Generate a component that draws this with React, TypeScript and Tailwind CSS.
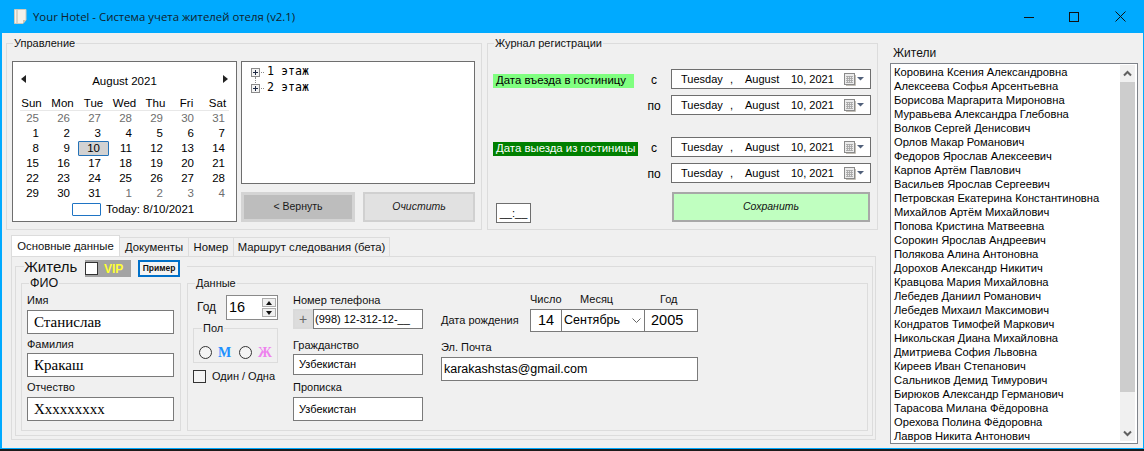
import type { ReactNode } from "react";

const residents = [
  "Коровина Ксения Александровна",
  "Алексеева Софья Арсентьевна",
  "Борисова Маргарита Мироновна",
  "Муравьева Александра Глебовна",
  "Волков Сергей Денисович",
  "Орлов Макар Романович",
  "Федоров Ярослав Алексеевич",
  "Карпов Артём Павлович",
  "Васильев Ярослав Сергеевич",
  "Петровская Екатерина Константиновна",
  "Михайлов Артём Михайлович",
  "Попова Кристина Матвеевна",
  "Сорокин Ярослав Андреевич",
  "Полякова Алина Антоновна",
  "Дорохов Александр Никитич",
  "Кравцова Мария Михайловна",
  "Лебедев Даниил Романович",
  "Лебедев Михаил Максимович",
  "Кондратов Тимофей Маркович",
  "Никольская Диана Михайловна",
  "Дмитриева София Львовна",
  "Киреев Иван Степанович",
  "Сальников Демид Тимурович",
  "Бирюков Александр Германович",
  "Тарасова Милана Фёдоровна",
  "Орехова Полина Фёдоровна",
  "Лавров Никита Антонович",
];

const weekDays = ["Sun", "Mon", "Tue", "Wed", "Thu", "Fri", "Sat"];

const calendarDays = [
  ...[25, 26, 27, 28, 29, 30, 31].map((d) => ({ d, muted: true })),
  ...Array.from({ length: 31 }, (_, i) => ({ d: i + 1, muted: false })),
  ...[1, 2, 3, 4].map((d) => ({ d, muted: true })),
];

function GroupBox({
  title,
  className,
  legendClass,
  children,
}: {
  title: ReactNode;
  className: string;
  legendClass: string;
  children: ReactNode;
}) {
  return (
    <fieldset className={`border border-[#dcdcdc] ${className}`}>
      <legend className={legendClass}>{title}</legend>
      {children}
    </fieldset>
  );
}

function Calendar() {
  return (
    <div className="flex h-[161px] w-[225px] shrink-0 flex-col border border-[#6e6e6e] bg-white pl-[3px] text-[11.5px] text-black">
      <div className="flex h-[33px] w-[217px] items-center justify-between pl-[5px] pr-[5px] pt-[2px]">
        <svg width="5" height="8" viewBox="0 0 5 8" className="-mt-[2px]">
          <path d="M5 0v8L0 4z" fill="#222" />
        </svg>
        <span className="pt-[5px]">August 2021</span>
        <svg width="5" height="8" viewBox="0 0 5 8" className="-mt-[2px]">
          <path d="M0 0v8l5-4z" fill="#222" />
        </svg>
      </div>
      <div className="grid h-[15px] w-[217px] grid-cols-7 items-center">
        {weekDays.map((w) => (
          <span key={w} className="text-center">
            {w}
          </span>
        ))}
      </div>
      <div className="ml-[4px] h-px w-[209px] bg-[#e8e8e8]" />
      <div className="grid w-[217px] grid-cols-7 auto-rows-[15px]">
        {calendarDays.map((c, i) => (
          <span
            key={i}
            className={`flex items-center justify-end pr-[8px] ${c.muted ? "text-[#6d6d6d]" : ""} ${
              c.d === 10 && !c.muted ? "rounded-[1px] border border-[#2472b8] bg-[#d2d2d2]" : ""
            }`}
          >
            {c.d}
          </span>
        ))}
      </div>
      <div className="mt-[2px] flex h-[13px] items-center pl-[56px]">
        <span className="h-[13px] w-[29px] rounded-[1px] border border-[#1f74c4]" />
        <span className="ml-[5px]">Today: 8/10/2021</span>
      </div>
    </div>
  );
}

function TreeRow({ label, line }: { label: string; line?: boolean }) {
  return (
    <div className="relative flex h-[16px] items-center">
      <svg width="16" height="9" viewBox="0 0 16 9" className="shrink-0">
        <rect x="0.5" y="0.5" width="8" height="8" fill="#f4f4f4" stroke="#8b8b8b" />
        <path d="M2 4.5h5M4.5 2v5" stroke="#1f2a44" />
        <path d="M10 4.5h1M12 4.5h1" stroke="#8b8b8b" />
      </svg>
      <span className="whitespace-pre font-['DejaVu_Sans_Mono',monospace] text-[11.6px] text-black">{label}</span>
      {line && <span className="absolute left-[4px] top-[13px] h-[6px] border-l border-dotted border-[#8b8b8b]" />}
    </div>
  );
}

function Tree() {
  return (
    <div className="h-[123px] border border-[#6e6e6e] bg-white pl-[9px] pt-[2px]">
      <TreeRow label="1 этаж" line />
      <TreeRow label="2 этаж" />
    </div>
  );
}

function CalendarIcon() {
  return (
    <svg width="20" height="13" viewBox="0 0 20 13" className="shrink-0">
      <rect x="0.5" y="0.5" width="10" height="11" fill="#ececec" stroke="#8a8a8a" />
      <path d="M11.5 2v10.5H2" fill="none" stroke="#c4c0b8" />
      <path d="M2 3.5h7M2 5.5h7M2 7.5h7M2 9.5h7M3.5 3v7M5.5 3v7M7.5 3v7" stroke="#a8a8a8" strokeWidth="0.9" />
      <path d="M13 4h7l-3.5 3.5z" fill="#51607a" />
    </svg>
  );
}

function DatePicker() {
  return (
    <div className="flex h-[20px] w-[200px] items-center border border-[#6e6e6e] bg-white text-[11px] text-black">
      <span className="ml-[9px] w-[49px] pt-[1px]">Tuesday</span>
      <span className="w-[15px] pt-[1px]">,</span>
      <span className="w-[46px] pt-[1px]">August</span>
      <span className="w-[53px] pt-[1px]">10, 2021</span>
      <CalendarIcon />
    </div>
  );
}

function DateRange({ label, labelClass, className }: { label: string; labelClass: string; className: string }) {
  return (
    <div className={`flex ${className}`}>
      <div className="w-[157px] shrink-0 pl-[5px] pt-[5px]">
        <div className={`flex h-[14px] items-center whitespace-nowrap pl-[3px] text-[11.4px] ${labelClass}`}>{label}</div>
      </div>
      <div className="flex flex-col gap-[6px]">
        {["с", "по"].map((p) => (
          <div key={p} className="flex items-center">
            <span className="mr-[8px] w-[18px] pt-[1px] text-center text-[12px] text-black">{p}</span>
            <DatePicker />
          </div>
        ))}
      </div>
    </div>
  );
}

function Management() {
  return (
    <GroupBox
      title="Управление"
      className="h-[194px] w-[476px] shrink-0 pl-[5px] pt-[11px]"
      legendClass="ml-[1px] h-[14px] px-[1px] text-[11px] leading-[14px] text-[#111]"
    >
      <div className="flex gap-[4px]">
        <Calendar />
        <div className="flex w-[234px] flex-col">
          <Tree />
          <div className="mt-[8px] flex gap-[8px] text-[10.5px] text-[#1a1a1a]">
            <button className="h-[30px] w-[114px] border-[3px] border-[#d4d4d4] bg-[#bdbdbd]">&lt; Вернуть</button>
            <button className="h-[30px] w-[112px] border-2 border-[#d0d0d0] bg-[#e1e1e1] italic">Очистить</button>
          </div>
        </div>
      </div>
    </GroupBox>
  );
}

function Journal() {
  return (
    <GroupBox
      title="Журнал регистрации"
      className="h-[194px] w-[391px] shrink-0 pt-[19px]"
      legendClass="ml-[6px] h-[14px] px-[1px] text-[11px] leading-[14px] text-[#111]"
    >
      <DateRange label="Дата въезда в гостиницу" labelClass="w-[141px] bg-[#80ff80] text-black" className="" />
      <DateRange label="Дата выезда из гостиницы" labelClass="w-[145px] bg-[#008000] text-white" className="mt-[22px]" />
      <div className="mt-[9px] flex items-start pl-[8px]">
        <div className="mt-[11px] flex h-[20px] w-[35px] items-center justify-center border border-[#6e6e6e] bg-white text-[11px] text-black">
          __:__
        </div>
        <button className="ml-[141px] h-[30px] w-[198px] border-2 border-[#a8a8a8] bg-[#c0ffc0] text-[10.5px] italic text-[#111]">
          Сохранить
        </button>
      </div>
    </GroupBox>
  );
}

function Field({ value, className }: { value: string; className: string }) {
  return <div className={`flex items-center border border-[#7a7a7a] bg-white text-black ${className}`}>{value}</div>;
}

function Caption({ text, className }: { text: string; className: string }) {
  return <div className={`flex items-center text-[11px] text-[#111] ${className}`}>{text}</div>;
}

function NameFields() {
  const rows = [
    { label: "Имя", value: "Станислав", h: "h-[20px]" },
    { label: "Фамилия", value: "Кракаш", h: "h-[19px] pt-[1px]" },
    { label: "Отчество", value: "Xxxxxxxxx", h: "h-[20px]" },
  ];
  return (
    <GroupBox
      title="ФИО"
      className="mt-[1px] h-[155px] w-[160px] shrink-0 pl-[5px]"
      legendClass="ml-[2px] h-[14px] px-[1px] text-[12.5px] leading-[14px] text-[#111]"
    >
      {rows.map((r) => (
        <div key={r.label}>
          <Caption text={r.label} className={r.h} />
          <Field
            value={r.value}
            className="h-[24px] w-[147px] pl-[6px] font-['Liberation_Serif',serif] text-[15px]"
          />
        </div>
      ))}
    </GroupBox>
  );
}

function AgeColumn() {
  return (
    <div className="w-[85px] shrink-0">
      <div className="flex h-[25px] items-center pl-[4px]">
        <span className="-mt-[2px] w-[29px] text-[12px] text-[#111]">Год</span>
        <div className="flex h-[25px] w-[52px] items-center justify-between border border-[#8a8a8a] bg-white pl-[2px] pr-[1px] text-[14.5px] text-black">
          <span>16</span>
          <div className="flex w-[14px] flex-col gap-[1px]">
            <div className="flex h-[9px] items-center justify-center border border-[#adadad] bg-[#f0f0f0]">
              <svg width="6" height="4" viewBox="0 0 6 4">
                <path d="M3 0l3 4H0z" fill="#111" />
              </svg>
            </div>
            <div className="flex h-[9px] items-center justify-center border border-[#adadad] bg-[#f0f0f0]">
              <svg width="6" height="4" viewBox="0 0 6 4">
                <path d="M0 0h6L3 4z" fill="#111" />
              </svg>
            </div>
          </div>
        </div>
      </div>
      <GroupBox
        title="Пол"
        className="mt-[1px] h-[42px] w-[85px]"
        legendClass="ml-[8px] h-[14px] px-[1px] text-[11px] leading-[14px] text-[#111]"
      >
        <div className="mt-[7px] flex h-[20px] items-center pl-[5px] font-['Liberation_Serif',serif] text-[14px] font-bold">
          <span className="h-[13px] w-[13px] rounded-full border border-[#333] bg-[#f4f4f4]" />
          <span className="ml-[6px] w-[21px] text-[#2090ff]">М</span>
          <span className="h-[13px] w-[13px] rounded-full border border-[#333] bg-[#f4f4f4]" />
          <span className="ml-[6px] text-[#ee82ee]">Ж</span>
        </div>
      </GroupBox>
      <div className="mt-[5px] flex items-center">
        <span className="h-[13px] w-[13px] border border-[#333] bg-[#f4f4f4]" />
        <span className="ml-[6px] text-[11px] text-[#111]">Один / Одна</span>
      </div>
    </div>
  );
}

function ContactColumn() {
  return (
    <div className="ml-[15px] w-[130px] shrink-0">
      <Caption text="Номер телефона" className="h-[19px] pt-[1px]" />
      <div className="flex h-[20px]">
        <div className="flex w-[20px] items-center justify-center border-2 border-[#dadada] bg-[#dcdcdc] text-[14px] text-[#666]">
          +
        </div>
        <Field value="(998) 12-312-12-__" className="w-[110px] pl-[1px] text-[11px]" />
      </div>
      <Caption text="Гражданство" className="h-[25px] pt-[7px]" />
      <Field value="Узбекистан" className="h-[21px] w-[130px] pl-[5px] text-[11px]" />
      <Caption text="Прописка" className="h-[22px] pt-[2px]" />
      <Field value="Узбекистан" className="h-[24px] w-[130px] pl-[5px] text-[11px]" />
    </div>
  );
}

function BirthColumn() {
  return (
    <div className="ml-[18px] w-[257px] shrink-0">
      <div className="flex h-[19px] items-center pl-[89px] pb-[1px] text-[11px] text-[#111]">
        <span className="w-[50px]">Число</span>
        <span className="w-[80px]">Месяц</span>
        <span>Год</span>
      </div>
      <div className="flex h-[23px] items-center">
        <span className="w-[89px] text-[11px] text-[#111]">Дата рождения</span>
        <Field value="14" className="h-[23px] w-[32px] justify-center text-[14.5px]" />
        <div className="-ml-px flex h-[23px] w-[84px] items-center justify-between border border-[#7a7a7a] bg-white pl-[2px] pr-[3px] text-[12.5px] text-black">
          <span>Сентябрь</span>
          <svg width="9" height="5" viewBox="0 0 9 5">
            <path d="M0.5 0.5l4 4 4-4" fill="none" stroke="#666" />
          </svg>
        </div>
        <Field value="2005" className="-ml-px h-[23px] w-[54px] pl-[6px] text-[14.5px]" />
      </div>
      <Caption text="Эл. Почта" className="h-[25px] pt-[5px]" />
      <Field value="karakashstas@gmail.com" className="h-[24px] w-[257px] pl-[2px] text-[12.5px]" />
    </div>
  );
}

function DataGroup() {
  return (
    <GroupBox
      title="Данные"
      className="mt-[1px] h-[155px] w-[681px] shrink-0"
      legendClass="ml-[7px] h-[14px] px-[1px] text-[11px] leading-[14px] text-[#111]"
    >
      <div className="flex pl-[5px] pt-[5px]">
        <AgeColumn />
        <div className="-mt-[5px] flex">
          <ContactColumn />
          <BirthColumn />
        </div>
      </div>
    </GroupBox>
  );
}

function ResidentTitle() {
  return (
    <div className="flex h-[18px] items-start pt-[3px]">
      <span className="w-[61px] text-[15px] leading-[14px] text-[#111]">Житель</span>
      <div className="flex h-[17px] w-[46px] items-center bg-[#a3a3a3]">
        <span className="h-[13px] w-[13px] border border-[#333] bg-white" />
        <span className="ml-[6px] text-[12px] font-bold text-[#ffff33]">VIP</span>
      </div>
      <button className="ml-[7px] h-[17px] w-[42px] border-2 border-[#0070c9] bg-[#f4f4f4] text-[8.5px] font-bold text-[#111]">
        Пример
      </button>
    </div>
  );
}

function TabPanel() {
  const tabs = [
    { label: "Документы", w: "w-[69px]" },
    { label: "Номер", w: "w-[45px]" },
    { label: "Маршрут следования (бета)", w: "w-[156px]" },
  ];
  return (
    <div className="ml-[5px] mt-[5px] w-[865px]">
      <div className="flex h-[21px] items-end text-[11.3px] text-[#111]">
        <div className="flex h-[21px] w-[109px] items-center justify-center border border-b-0 border-[#dcdcdc] bg-white">
          Основные данные
        </div>
        {tabs.map((t) => (
          <div key={t.label} className={`flex h-[19px] items-center justify-center border-r border-t border-[#dcdcdc] pt-[1px] ${t.w}`}>
            {t.label}
          </div>
        ))}
      </div>
      <div className="h-[184px] border border-[#dcdcdc] pl-[3px]">
        <GroupBox title={<ResidentTitle />} className="h-[179px] w-[858px] pl-[5px]" legendClass="ml-[3px] h-[18px] pr-[7px]">
          <div className="flex gap-[6px]">
            <NameFields />
            <DataGroup />
          </div>
        </GroupBox>
      </div>
    </div>
  );
}

function ResidentList() {
  return (
    <div className="ml-[12px] w-[248px] shrink-0 pt-[13px]">
      <div className="mb-[3px] h-[14px] pl-[3px] text-[12px] leading-[14px] text-[#111]">Жители</div>
      <div className="flex h-[381px] border border-[#7f838a] bg-white">
        <div className="min-w-0 flex-1 pl-[3px] pt-[1px] text-[11.2px] leading-[14px] text-black">
          {residents.map((r) => (
            <div key={r} className="h-[14px] whitespace-nowrap">
              {r}
            </div>
          ))}
        </div>
        <div className="mb-[2px] mr-[2px] mt-[1px] flex w-[15px] shrink-0 flex-col bg-[#f0f0f0]">
          <div className="flex h-[17px] items-center justify-center">
            <svg width="9" height="7" viewBox="0 0 9 7">
              <path d="M1 5.5l3.5-3.5 3.5 3.5" fill="none" stroke="#606060" strokeWidth="2" />
            </svg>
          </div>
          <div className="h-[310px] bg-[#cdcdcd]" />
          <div className="flex flex-1 items-end justify-center pb-[4px]">
            <svg width="9" height="7" viewBox="0 0 9 7">
              <path d="M1 1.5l3.5 3.5 3.5-3.5" fill="none" stroke="#606060" strokeWidth="2" />
            </svg>
          </div>
        </div>
      </div>
    </div>
  );
}

function TitleBar() {
  return (
    <div className="flex h-[33px] items-center bg-[#00aaff] text-black">
      <svg width="13" height="15" viewBox="0 0 13 15" className="-mt-[1px] ml-[12px] shrink-0">
        <path d="M0.5 0.5h11.5v10.5l-3 3.5H0.5z" fill="#f4f1ea" stroke="#cfcabc" />
        <path d="M3 1v13" stroke="#bdb7a6" />
        <path d="M9 14.5v-3.5h3z" fill="#c9c4b6" />
      </svg>
      <span className="ml-[6px] font-['Open_Sans',sans-serif] text-[11.4px] text-[#10222c]">
        Your Hotel - Система учета жителей отеля (v2.1)
      </span>
      <div className="ml-auto flex h-full items-center">
        <div className="flex w-[44px] justify-center">
          <svg width="10" height="10" viewBox="0 0 10 10">
            <path d="M0 5.5h10" stroke="#111" />
          </svg>
        </div>
        <div className="flex w-[46px] justify-center">
          <svg width="10" height="10" viewBox="0 0 10 10">
            <rect x="0.5" y="0.5" width="9" height="9" fill="none" stroke="#111" />
          </svg>
        </div>
        <div className="flex w-[46px] justify-center">
          <svg width="11" height="11" viewBox="0 0 11 11">
            <path d="M0.5 0.5l10 10M10.5 0.5l-10 10" stroke="#111" />
          </svg>
        </div>
      </div>
    </div>
  );
}

export default function App() {
  return (
    <div className="h-[451px] w-[1144px] overflow-hidden bg-[#1c1c1c] font-['Liberation_Sans',sans-serif]">
      <div className="h-[449px] w-[1144px] border-b border-l-2 border-r border-[#00aaff] bg-[#f0f0f0]">
        <TitleBar />
        <div className="flex">
          <div className="w-[876px] shrink-0 pl-[4px] pt-[3px]">
            <div className="flex w-[872px] gap-[5px]">
              <Management />
              <Journal />
            </div>
            <TabPanel />
          </div>
          <ResidentList />
        </div>
      </div>
    </div>
  );
}
